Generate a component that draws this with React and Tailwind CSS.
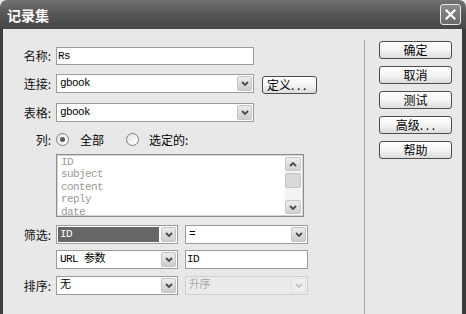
import React from 'react';

const cjk = '[font-family:Noto_Sans_CJK_SC,Noto_Sans,sans-serif]';
const mono = 'text-[11px] tracking-[-0.6px] [font-family:Liberation_Mono,Noto_Sans_CJK_SC,monospace]';

// chevron used by dropdown arrows and scrollbar
function Chevron({ up = false, color = '#4a4a4a' }) {
  return (
    <svg width="8" height="5" viewBox="0 0 8 5">
      <path
        d={up ? 'M1 4 L4 1 L7 4' : 'M1 1 L4 4 L7 1'}
        fill="none"
        stroke={color}
        strokeWidth="1.8"
      />
    </svg>
  );
}

function Arrow({ disabled = false }) {
  return disabled ? (
    <div className="mr-px flex h-[15px] w-[15px] items-center justify-center rounded-[2px] border border-[#e2e2e2] bg-[#eeeeee]">
      <Chevron color="#c6c6c6" />
    </div>
  ) : (
    <div className="mr-px flex h-[15px] w-[15px] items-center justify-center rounded-[2px] border border-[#c4c4c4] bg-gradient-to-b from-[#ececec] to-[#cdcdcd]">
      <Chevron />
    </div>
  );
}

function Select({ value, className, highlight = false, disabled = false }) {
  return (
    <div
      className={
        'flex h-[19px] items-center border ' +
        (disabled ? 'border-[#cfcfcf] bg-[#ebebeb] ' : 'border-[#9c9c9c] bg-white ') +
        className
      }
    >
      {highlight ? (
        <div className="ml-px mr-[2px] flex h-[15px] flex-1 items-center bg-[#666666] pl-[2px] text-white">
          {value}
        </div>
      ) : (
        <div className={'flex-1 pl-[3px] ' + (disabled ? 'text-[#a8a8a8]' : 'text-black')}>{value}</div>
      )}
      <Arrow disabled={disabled} />
    </div>
  );
}

function Field({ value, className }) {
  return (
    <div className={'flex h-[19px] items-center border border-[#9c9c9c] bg-white pl-px ' + className}>{value}</div>
  );
}

function Label({ children }) {
  return (
    <div className={'w-[53px] pr-[5px] text-right text-[12px] leading-none text-[#111] ' + cjk}>
      {children}
    </div>
  );
}

function Button({ children }) {
  return (
    <div
      className={
        'flex h-[18px] w-[73px] items-center justify-center rounded-[3px] border border-[#4d4d4d] bg-gradient-to-b from-[#ffffff] via-[#f4f4f4] to-[#dcdcdc] text-[12px] leading-none text-black ' +
        cjk
      }
    >
      {children}
    </div>
  );
}

function Radio({ checked }) {
  return (
    <div className="flex h-[13px] w-[13px] items-center justify-center rounded-full border border-[#7c7c7c] bg-gradient-to-br from-[#e4e4e4] to-white">
      {checked && <div className="h-[5px] w-[5px] rounded-full bg-[#5a5a5a]" />}
    </div>
  );
}

export default function App() {
  const columns = ['ID', 'subject', 'content', 'reply', 'date'];

  return (
    <div className="flex h-[314px] w-[466px] flex-col overflow-hidden bg-[#e8e8e8]">
      {/* title bar */}
      <div className="flex h-[29px] items-center justify-between rounded-t-[7px] bg-gradient-to-b from-[#727272] via-[#555555] to-[#474747] pl-[7px] pr-[5px]">
        <span className={'text-[14px] font-bold leading-none text-white ' + cjk}>记录集</span>
        <div className="flex h-[21px] w-[21px] items-center justify-center rounded-[3px] border border-[#e6e6e6] bg-gradient-to-b from-[#8a8a8a] to-[#6a6a6a]">
          <svg width="11" height="11" viewBox="0 0 11 11">
            <path d="M1.5 1.5 L9.5 9.5 M9.5 1.5 L1.5 9.5" stroke="white" strokeWidth="2.2" strokeLinecap="square" />
          </svg>
        </div>
      </div>

      <div className="flex flex-1 border-l-[3px] border-r-[4px] border-l-[#404040] border-r-[#3a3a3a]">
        {/* form */}
        <div className="w-[361px] pt-[18px]">
          <div className="flex items-center">
            <Label>名称:</Label>
            <div className={'flex h-[18px] w-[198px] items-center border border-[#9c9c9c] bg-white pl-px ' + mono}>Rs</div>
          </div>

          <div className="mt-[8px] flex items-center">
            <Label>连接:</Label>
            <Select value="gbook" className={'w-[198px] ' + mono} />
            <div
              className={
                'ml-[8px] mt-[3px] flex h-[18px] w-[55px] items-center rounded-[3px] border border-[#4d4d4d] bg-gradient-to-b from-white via-[#f4f4f4] to-[#dcdcdc] pl-[4px] text-[12px] leading-none ' +
                cjk
              }
            >
              定义. . .
            </div>
          </div>

          <div className="mt-[9px] flex items-center">
            <Label>表格:</Label>
            <Select value="gbook" className={'w-[198px] ' + mono} />
          </div>

          <div className={'mt-[11px] flex h-[13px] items-center text-[12px] leading-none ' + cjk}>
            <Label>列:</Label>
            <Radio checked />
            <span className="ml-[11px]">全部</span>
            <div className="ml-[22px]">
              <Radio />
            </div>
            <span className="ml-[10px]">选定的:</span>
          </div>

          <div className="ml-[53px] mt-[8px] flex h-[63px] w-[248px] border border-[#8e8e8e] bg-white">
            <div className="flex flex-1 border border-[#d4d4d4]">
              <div className={'flex-1 pl-[3px] leading-[12.4px] text-[#9a9a9a] ' + mono}>
                {columns.map((c) => (
                  <div key={c}>{c}</div>
                ))}
              </div>
              <div className="my-px mr-px flex w-[16px] flex-col bg-[#f3f3f3]">
                <div className="flex h-[14px] items-center justify-center rounded-[2px] border border-[#c8c8c8] bg-gradient-to-b from-[#ececec] to-[#d2d2d2]">
                  <Chevron up />
                </div>
                <div className="mt-[2px] h-[15px] rounded-[2px] border border-[#c4c4c4] bg-[#d9d9d9]" />
                <div className="flex-1" />
                <div className="flex h-[14px] items-center justify-center rounded-[2px] border border-[#c8c8c8] bg-gradient-to-b from-[#ececec] to-[#d2d2d2]">
                  <Chevron />
                </div>
              </div>
            </div>
          </div>

          <div className="mt-[8px] flex items-center">
            <Label>筛选:</Label>
            <Select value="ID" highlight className={'w-[122px] ' + mono} />
            <Select value="=" className={'ml-[7px] w-[123px] ' + mono} />
          </div>

          <div className="mt-[6px] flex items-center">
            <Label />
            <Select value="URL 参数" className={'w-[122px] ' + mono} />
            <Field value="ID" className={'ml-[7px] w-[123px] ' + mono} />
          </div>

          <div className="mt-[7px] flex items-center">
            <Label>排序:</Label>
            <Select value="无" className={'w-[122px] ' + mono} />
            <Select value="升序" disabled className={'ml-[7px] w-[123px] ' + mono} />
          </div>
        </div>

        {/* separator */}
        <div className="mt-[11px] w-px bg-[#a4a4a4]" />

        {/* buttons */}
        <div className="flex flex-col gap-[7px] pl-[14px] pt-[12px]">
          <Button>确定</Button>
          <Button>取消</Button>
          <Button>测试</Button>
          <Button>高级. . .</Button>
          <Button>帮助</Button>
        </div>
      </div>
    </div>
  );
}
